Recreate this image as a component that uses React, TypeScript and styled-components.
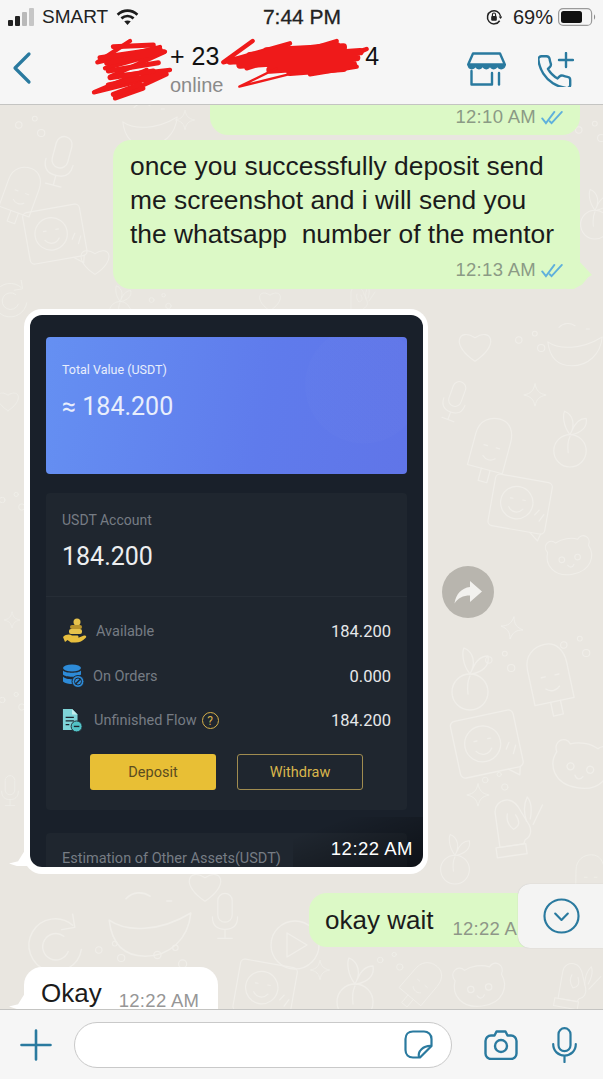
import React from "react";
import styled, { createGlobalStyle } from "styled-components";

const GlobalStyle = createGlobalStyle`
  html, body { margin: 0; padding: 0; background: #e9e6e0; }
  * { box-sizing: border-box; }
`;

const SANS = `"Liberation Sans", Arial, sans-serif`;
const ROBOTO = `Roboto, "Liberation Sans", sans-serif`;
const TEAL = "#2a7a9f";

// kind, x, y, scale, rotation - page coordinates of the wallpaper doodles
const doodles: Array<[string, number, number, number, number]> = [
  ["apple", 470, 680, 1, 0], ["pop", 550, 680, 1, -12], ["card", 487, 745, 1, -12], ["bear", 580, 770, 1, 10],
  ["mitten", 515, 825, 1, -8], ["spark", 512, 628, 0.7, 10], ["spark", 478, 795, 0.7, 0], ["dots", 500, 660, 0.8, 0],
  ["dots", 495, 780, 0.7, 0], ["dots", 575, 645, 0.8, 0], ["bear", 570, 560, 0.8, -10], ["card", 520, 505, 0.9, 10],
  ["apple", 570, 440, 0.9, 0], ["pop", 490, 450, 0.9, 15], ["mic", 455, 400, 0.8, 20], ["spark", 535, 395, 0.7, 0],
  ["heart", 475, 345, 0.9, 0], ["dots", 530, 340, 0.8, 0], ["bowl", 575, 345, 0.8, 0], ["apple", 455, 860, 0.8, 0],
  ["pop", 590, 880, 0.7, 0], ["donut", 55, 945, 1.1, 0], ["bowl", 150, 925, 1.2, 0], ["mic", 225, 915, 0.9, 0],
  ["heart", 205, 885, 0.9, 0], ["play", 295, 945, 1, 0], ["dots", 110, 950, 0.8, 0], ["dots", 170, 955, 0.9, 0],
  ["card", 265, 990, 0.9, 10], ["apple", 355, 990, 1, 0], ["bear", 480, 990, 0.9, -8], ["mitten", 575, 985, 0.8, 10],
  ["pop", 420, 985, 0.7, 40], ["spark", 320, 970, 0.6, 0], ["dots", 390, 960, 0.7, 0], ["donut", 10, 300, 0.7, 0],
  ["mic", 60, 160, 1, 15], ["heart", 95, 260, 0.8, 0], ["card", 55, 235, 0.9, -10], ["bowl", 150, 125, 0.8, 0],
  ["spark", 185, 120, 0.6, 0], ["dots", 30, 125, 0.8, 0], ["pop", 20, 195, 0.8, 20], ["apple", 120, 305, 0.6, 0],
  ["heart", 270, 300, 0.6, 0], ["mitten", 360, 300, 0.5, 0], ["bear", 520, 220, 0.8, 10], ["apple", 595, 215, 0.8, 0],
  ["dots", 590, 130, 0.8, 0], ["dots", 160, 300, 0.6, 0], ["dots", 12, 500, 0.7, 0], ["dots", 12, 700, 0.7, 0],
  ["spark", 12, 620, 0.5, 0], ["heart", 8, 400, 0.6, 0], ["mic", 10, 790, 0.6, 0],
];

const Doodle: React.FC<{ kind: string }> = ({ kind }) => {
  switch (kind) {
    case "apple":
      return (
        <>
          <circle cx="0" cy="12" r="18" />
          <path d="M0 -6C-8 -16 -8 -28 -6 -32 4 -28 6 -16 0 -6ZM2 -10C6 -20 12 -24 18 -24 20 -14 12 -8 2 -6M-2 14c-1-8 0-14 2-18" />
        </>
      );
    case "pop":
      return (
        <>
          <path d="M-20 -14C-20 -30 -8 -36 2 -36 14 -36 20 -26 20 -14V22H-20Z" />
          <path d="M-4 22V36H6V22M-8 -4h4M6 -4h4M-6 8c4 4 10 4 14 0" />
        </>
      );
    case "card":
      return (
        <>
          <rect x="-32" y="-30" width="64" height="58" rx="5" />
          <circle cx="-4" cy="-2" r="18" />
          <path d="M-12 -6h3M2 -6h3M-12 4c4 6 12 6 16 0M18 8l4-6M24 14l4-8M16 28l10 8 2-8" />
        </>
      );
    case "bear":
      return (
        <>
          <path d="M-26 -14c-6-10 6-18 12-10 8-4 20-4 28 0 6-8 18 0 12 10 6 14-2 32-26 32S-32 0-26-14Z" />
          <circle cx="-10" cy="-2" r="3.500" />
          <circle cx="10" cy="-2" r="3.500" />
          <path d="M-4 6c2 4 6 4 8 0" />
        </>
      );
    case "mitten":
      return (
        <>
          <path d="M-18 20V-14c0-8 6-12 12-12 8 0 12 8 14 14l6 14c2 6 0 12-6 14l-2 4H-18Z" />
          <path d="M-22 20h30v10h-30ZM-6 -12c-2 6 0 12 4 16 6-2 8-6 4-14M12 -2c-2-10 0-18 4-24 4 6 2 16 0 22M18 2l12-18" />
        </>
      );
    case "spark":
      return <path d="M0 -16C2 -6 6 -2 16 0 6 2 2 6 0 16-2 6-6 2-16 0-6-2-2-6 0-16Z" />;
    case "dots":
      return (
        <>
          <circle cx="-14" cy="0" r="4" />
          <circle cx="6" cy="-8" r="3" />
          <circle cx="14" cy="10" r="4.500" />
        </>
      );
    case "mic":
      return (
        <>
          <rect x="-8" y="-24" width="16" height="32" rx="8" />
          <path d="M-14 2c0 10 6 14 14 14S14 12 14 2M0 16V26M-8 26H8" />
        </>
      );
    case "donut":
      return <path d="M16 -18A24 24 0 1 0 24 4M16 -28l2 12-12 2M8 -8A12 12 0 1 0 12 6" />;
    case "bowl":
      return <path d="M-34 -4C-20 6 8 6 34 -10 32 12 16 26 -4 26S-32 14-34 -4ZM-20 -22c6-6 14-6 20-2M14 -20h4" />;
    case "play":
      return (
        <>
          <circle cx="0" cy="0" r="24" />
          <path d="M-8 -12L12 0-8 12Z" />
        </>
      );
    default:
      return <path d="M0 18C-28 0-18-20 0-8 18-20 28 0 0 18Z" />;
  }
};

const App: React.FC = () => {
  return (
    <Page>
      <GlobalStyle />
      <TopBar>
        <StatusBar>
          <StatusLeft>
            <SignalIcon />
            <span>SMART</span>
            <WifiIcon />
          </StatusLeft>
          <StatusTime>7:44 PM</StatusTime>
          <StatusRight>
            <LockIcon />
            <span>69%</span>
            <BatteryIcon />
          </StatusRight>
        </StatusBar>
        <NavBar>
          <BackIcon />
          <Contact>
            <ContactName>
              <span>+ 23</span>
              <NameGap />
              <span>4</span>
            </ContactName>
            <ContactStatus>online</ContactStatus>
          </Contact>
          <NavActions>
            <StoreIcon />
            <CallPlusIcon />
          </NavActions>
        </NavBar>
        <Scribble />
      </TopBar>

      <Chat>
        <Wallpaper viewBox="0 0 603 904" aria-hidden="true">
          <g transform="translate(0 -105)" fill="none" stroke="#f0eee9" strokeWidth="1.300" strokeLinejoin="round" strokeLinecap="round">
            {doodles.map(([kind, x, y, s, rot], i) => (
              <g key={i} transform={`translate(${x} ${y}) rotate(${rot}) scale(${s})`}>
                <Doodle kind={kind} />
              </g>
            ))}
          </g>
        </Wallpaper>

        <ClippedSent>
          <Meta>12:10 AM <Ticks /></Meta>
        </ClippedSent>

        <SentBubble>
          <BubbleText>
            once you successfully deposit send
            <br />
            me screenshot and i will send you
            <br />
            the whatsapp&nbsp; number of the mentor
          </BubbleText>
          <SentMeta>12:13 AM <Ticks /></SentMeta>
          <SentTail />
        </SentBubble>

        <ImageRow>
          <ImageBubble>
            <ReceivedTail $bottom={8} />
            <Screenshot>
              <ValueCard>
                <ValueLabel>Total Value (USDT)</ValueLabel>
                <ValueAmount>≈ 184.200</ValueAmount>
              </ValueCard>
              <AccountPanel>
                <AccountHead>
                  <AccountLabel>USDT Account</AccountLabel>
                  <AccountAmount>184.200</AccountAmount>
                </AccountHead>
                <AccountRows>
                  <AccountRow>
                    <RowLabel $gap={7}><CoinsIcon />Available</RowLabel>
                    <RowValue>184.200</RowValue>
                  </AccountRow>
                  <AccountRow>
                    <RowLabel $gap={9}><DatabaseIcon />On Orders</RowLabel>
                    <RowValue>0.000</RowValue>
                  </AccountRow>
                  <AccountRow>
                    <RowLabel $gap={11}><FlowIcon />Unfinished Flow<HelpMark>?</HelpMark></RowLabel>
                    <RowValue>184.200</RowValue>
                  </AccountRow>
                </AccountRows>
                <AccountButtons>
                  <DepositButton>Deposit</DepositButton>
                  <WithdrawButton>Withdraw</WithdrawButton>
                </AccountButtons>
              </AccountPanel>
              <OtherPanel>Estimation of Other Assets(USDT)</OtherPanel>
              <ImageTime>12:22 AM</ImageTime>
            </Screenshot>
          </ImageBubble>
          <ForwardButton>
            <ForwardIcon />
          </ForwardButton>
        </ImageRow>

        <WaitBubble>
          <ShortText>okay wait</ShortText>
          <ShortMeta>12:22 AM</ShortMeta>
        </WaitBubble>

        <ScrollDown>
          <ScrollDownIcon />
        </ScrollDown>

        <OkayBubble>
          <ShortText>Okay</ShortText>
          <ShortMeta>12:22 AM</ShortMeta>
          <ReceivedTail $bottom={18} />
        </OkayBubble>
      </Chat>

      <Composer>
        <PlusIcon />
        <ComposerInput>
          <StickerIcon />
        </ComposerInput>
        <ComposerActions>
          <CameraIcon />
          <MicIcon />
        </ComposerActions>
      </Composer>
    </Page>
  );
};

export default App;

const SignalIcon = () => (
  <svg width="27" height="20" viewBox="0 0 27 20">
    <rect x="0" y="13" width="5" height="6" rx="1" fill="#222" />
    <rect x="7" y="9" width="5" height="10" rx="1" fill="#222" />
    <rect x="14" y="5" width="5" height="14" rx="1" fill="#b9b9b9" />
    <rect x="21" y="1" width="5" height="18" rx="1" fill="#c6c6c6" />
  </svg>
);

const WifiIcon = () => (
  <svg width="25" height="18" viewBox="0 0 26 20" fill="none" stroke="#1c1c1c" strokeWidth="3">
    <path d="M2 7.500C8.500 1.500 17.500 1.500 24 7.500" />
    <path d="M6.200 11.500C10.300 8 15.700 8 19.800 11.500" />
    <path d="M13 19l-3.600-4.200C11.400 13.400 14.600 13.400 16.600 14.800Z" fill="#1c1c1c" stroke="none" />
  </svg>
);

const LockIcon = () => (
  <StatusLock width="16" height="16" viewBox="0 0 17 17" fill="none" stroke="#222" strokeWidth="1.600">
    <path d="M14.500 12.500A7 7 0 1 1 15.500 8" />
    <path d="M13.500 8h4l-2 2.500Z" fill="#222" stroke="none" />
    <rect x="5.500" y="7.500" width="6" height="5" rx="1" fill="#222" stroke="none" />
    <path d="M6.800 7.500V6a1.700 1.700 0 0 1 3.400 0v1.500" strokeWidth="1.200" />
  </StatusLock>
);

const BatteryIcon = () => (
  <svg width="38" height="18" viewBox="0 0 38 18">
    <rect x="0.600" y="0.600" width="33" height="16.800" rx="4.500" fill="none" stroke="#9a9a9a" strokeWidth="1.200" />
    <rect x="3" y="3" width="21" height="12" rx="2.500" fill="#111" />
    <path d="M36 6.500c1.500.5 1.500 4.500 0 5Z" fill="#8c8c8c" />
  </svg>
);

const BackIcon = () => (
  <NavBack width="20" height="34" viewBox="0 0 20 34" fill="none" stroke={TEAL} strokeWidth="3.200" strokeLinecap="round" strokeLinejoin="round">
    <path d="M17 3L3 17l14 14" />
  </NavBack>
);

const StoreIcon = () => (
  <svg width="39" height="34" viewBox="0 0 39 34" fill="none" stroke={TEAL} strokeWidth="2.400" strokeLinejoin="round" strokeLinecap="round">
    <path d="M6 1.500h27l4.800 11H1.200Z" />
    <path d="M1.200 13c.5 5 6.500 5 7.200 0 .7 5 6.500 5 7.300 0 .7 5 6.500 5 7.300 0 .7 5 6.500 5 7.300 0 .7 5 7 5 7.800 0" fill={TEAL} strokeWidth="1.400" />
    <path d="M4.500 19v13.500H25V21" />
    <path d="M32 21v11.500" />
  </svg>
);

const CallPlusIcon = () => (
  <svg width="36" height="35" viewBox="0 0 36 35" fill="none" stroke={TEAL} strokeLinecap="round" strokeLinejoin="round">
    <g transform="translate(-3 1) scale(1.600)" strokeWidth="1.500">
      <path d="M22 16.920v3a2 2 0 0 1-2.180 2 19.790 19.790 0 0 1-8.630-3.070 19.500 19.500 0 0 1-6-6 19.790 19.790 0 0 1-3.070-8.670A2 2 0 0 1 4.110 2h3a2 2 0 0 1 2 1.720 12.840 12.840 0 0 0 .7 2.810 2 2 0 0 1-.45 2.110L8.090 9.910a16 16 0 0 0 6 6l1.270-1.270a2 2 0 0 1 2.110-.45 12.840 12.840 0 0 0 2.810.7A2 2 0 0 1 22 16.920z" />
    </g>
    <path d="M28 1v14M21 8h14" strokeWidth="2.400" />
  </svg>
);

const Ticks = () => (
  <svg width="23" height="15" viewBox="0 0 24 16" fill="none" stroke="#5fb0dc" strokeWidth="2" strokeLinecap="round">
    <path d="M1 9l4 5L14 2" />
    <path d="M9 12l2 2L22 2" />
  </svg>
);

const ForwardIcon = () => (
  <svg width="30" height="26" viewBox="0 0 30 26">
    <path d="M17 2l12 10.500L17 23v-6.500C10 16.500 5 19 1.500 24.500 3 15 8.500 9 17 8Z" fill="#f2f1ee" />
  </svg>
);

const ScrollDownIcon = () => (
  <svg width="37" height="36" viewBox="0 0 38 37" fill="none" stroke={TEAL} strokeWidth="2.200" strokeLinecap="round" strokeLinejoin="round">
    <ellipse cx="19" cy="18.500" rx="17.500" ry="17" />
    <path d="M12.500 16L19 22.500l6.500-6.500" />
  </svg>
);

const PlusIcon = () => (
  <svg width="32" height="32" viewBox="0 0 32 32" fill="none" stroke={TEAL} strokeWidth="2.600" strokeLinecap="round">
    <path d="M16 1.500v29M1.500 16h29" />
  </svg>
);

const StickerIcon = () => (
  <svg width="29" height="29" viewBox="0 0 29 29" fill="none" stroke={TEAL} strokeWidth="2.200" strokeLinejoin="round">
    <path d="M9 1.500h11c4 0 7.500 3 7.500 7.500v7L16 27.500H9c-4.500 0-7.500-3-7.500-7.500V9C1.500 4.500 4.500 1.500 9 1.500Z" />
    <path d="M15 27.500c-1.500-6 4-12 12.500-11.500" />
  </svg>
);

const CameraIcon = () => (
  <svg width="34" height="30" viewBox="0 0 34 30" fill="none" stroke={TEAL} strokeWidth="2.400" strokeLinejoin="round">
    <path d="M7 5.500h3.500l2-4h9l2 4H27c3 0 5.500 2.500 5.500 5.500v12.500c0 3-2.500 5.500-5.500 5.500H7c-3 0-5.500-2.500-5.500-5.500V11C1.500 8 4 5.500 7 5.500Z" />
    <circle cx="17" cy="16" r="6" />
  </svg>
);

const MicIcon = () => (
  <svg width="25" height="36" viewBox="0 0 25 36" fill="none" stroke={TEAL} strokeWidth="2.200" strokeLinecap="round">
    <rect x="6.500" y="1.200" width="12" height="23" rx="6" />
    <path d="M1.200 17c0 7 5 11.500 11.300 11.500S23.800 24 23.800 17M12.500 28.500v6.500" />
  </svg>
);

const CoinsIcon = () => (
  <svg width="27" height="27" viewBox="0 0 27 27">
    <circle cx="15" cy="4" r="3.500" fill="#e6c24c" />
    <rect x="8" y="7" width="12" height="4" rx="2" fill="#b8932c" />
    <rect x="7" y="11" width="13" height="5" rx="2" fill="#e6c24c" />
    <path d="M1 19c3-3 7-3 9-1.500h5c2 0 2 2.500 0 2.500h-4l6-.5 5-2c2-.5 3 1 1.500 2.500-3 3-6 4.500-10 4.500H9L5.500 22 3 24Z" fill="#e8bf3e" />
  </svg>
);

const DatabaseIcon = () => (
  <svg width="22" height="24" viewBox="0 0 22 24">
    <ellipse cx="10" cy="4" rx="9" ry="3.500" fill="#2d8bd8" />
    <path d="M1 6.500c2 3 16 3 18 0v4c-2 3-16 3-18 0Z" fill="#2d8bd8" />
    <path d="M1 12.500c2 3 10 3 12 2.500l-2 5c-4 0-8-.5-10-2.500Z" fill="#2d8bd8" />
    <circle cx="16" cy="17.500" r="6" fill="#2d8bd8" stroke="#1f262f" strokeWidth="1" />
    <path d="M13.500 20l5-5" stroke="#1f262f" strokeWidth="1.400" />
    <circle cx="16" cy="17.500" r="3.500" fill="none" stroke="#1f262f" strokeWidth="1" />
  </svg>
);

const FlowIcon = () => (
  <svg width="21" height="27" viewBox="0 0 23 27">
    <path d="M1 1h10l6 6v9l-6 8H1Z" fill="#7ed4d8" />
    <path d="M11 1l6 6h-6Z" fill="#c5eeee" />
    <path d="M4 10h9M4 14h9M4 18h4" stroke="#1f262f" strokeWidth="1.400" />
    <circle cx="16" cy="20" r="6" fill="#52c2c6" stroke="#1f262f" strokeWidth="1" />
    <path d="M13 20h6" stroke="#1f262f" strokeWidth="1.500" />
  </svg>
);

// scratch marks hiding the contact's name; coordinates follow a 3x crop of the header
const Scribble = () => (
  <ScribbleSvg viewBox="0 0 900 210" width="300" height="70" fill="none" stroke="#ef1a1a" strokeLinecap="round" strokeLinejoin="round">
    <g strokeWidth="13">
      <path d="M120 18L22 82 210 36 45 100 225 50 60 125 240 105 70 150 170 105 12 172 230 118 75 190 160 160" />
      <path d="M70 35L190 30M30 68l180-26M50 85l170-35M55 108l150-25M60 128l130-20M55 150l90-20M70 178l80-30" strokeWidth="15" />
    </g>
    <g strokeWidth="13">
      <path d="M488 18L400 82 600 25 470 100 740 18 600 110 830 42 660 118 800 95" />
      <path d="M420 78L810 50M450 90L800 68M480 62L740 32M540 105L790 88M530 48L760 36M600 112L760 100" strokeWidth="22" />
      <path d="M560 100L448 155 620 112" strokeWidth="7" />
    </g>
  </ScribbleSvg>
);

const Page = styled.div`
  width: 603px;
  height: 1079px;
  display: flex;
  flex-direction: column;
  overflow: hidden;
  font-family: ${SANS};
  background: #e9e6e0;
`;

const TopBar = styled.header`
  flex: none;
  height: 105px;
  padding: 0 0 0 8px;
  background: #f6f6f6;
  border-bottom: 1px solid #c4c4c2;
  position: relative;
  z-index: 2;
`;

const StatusBar = styled.div`
  height: 34px;
  display: grid;
  grid-template-columns: 1fr auto 1fr;
  align-items: center;
  padding-right: 7px;
  font-size: 20px;
  color: #222;
`;

const StatusLeft = styled.div`
  display: flex;
  align-items: center;
  gap: 7px;
  font-size: 19px;
`;

const StatusTime = styled.div`
  font-size: 21px;
  -webkit-text-stroke: 0.3px #222;
`;

const StatusRight = styled.div`
  display: flex;
  align-items: center;
  justify-content: flex-end;
  gap: 5px;
`;

const StatusLock = styled.svg`
  margin-right: 6px;
`;

const NavBar = styled.div`
  height: 70px;
  display: flex;
  align-items: center;
`;

const NavBack = styled.svg`
  flex: none;
  margin: 0 0 2px 4px;
`;

const Contact = styled.div`
  margin-left: 138px;
  flex: 1;
  margin-top: -1px;
`;

const ContactName = styled.div`
  display: flex;
  font-size: 25px;
  line-height: 28px;
  color: #111;
`;

const NameGap = styled.div`
  width: 146px;
`;

const ContactStatus = styled.div`
  margin-top: 4px;
  font-size: 20px;
  line-height: 22px;
  color: #8a8a8a;
`;

const ScribbleSvg = styled.svg`
  position: absolute;
  left: 90px;
  top: 35px;
`;

const NavActions = styled.div`
  display: flex;
  align-items: center;
  gap: 32px;
  padding-right: 29px;
`;

const Chat = styled.main`
  flex: 1;
  min-height: 0;
  position: relative;
  overflow: hidden;
  display: flex;
  flex-direction: column;

  > * {
    flex: none;
  }
`;

const Wallpaper = styled.svg`
  position: absolute;
  inset: 0;
  width: 603px;
  height: 904px;
`;

const Bubble = styled.div`
  position: relative;
  background: #dcf9c6;
  border-radius: 18px;
`;

const ClippedSent = styled(Bubble)`
  align-self: flex-end;
  width: 370px;
  height: 30px;
  margin-right: 23px;
  border-radius: 0 0 18px 18px;
  display: flex;
  justify-content: flex-end;
  padding: 0 16px 0 0;
`;

const SentBubble = styled(Bubble)`
  align-self: flex-end;
  width: 467px;
  height: 149px;
  margin: 5px 23px 0 0;
  padding: 9px 16px 0 17px;
`;

const SentTail = styled.div`
  position: absolute;
  right: -12px;
  bottom: 0;
  width: 26px;
  height: 28px;
  background: #dcf9c6;
  clip-path: polygon(50% 0, 100% 50%, 85% 58%, 62% 84%, 30% 100%, 0 100%);
`;

const BubbleText = styled.div`
  font-size: 26.400px;
  line-height: 34px;
  white-space: nowrap;
  color: #1b1b1b;
`;

const Meta = styled.div`
  display: flex;
  align-items: center;
  justify-content: flex-end;
  gap: 5px;
  font-size: 18.500px;
  line-height: 24px;
  height: 24px;
  color: #8b9a85;
  letter-spacing: 0.3px;
`;

const SentMeta = styled(Meta)`
  margin-top: 7px;
`;

const ImageRow = styled.div`
  display: flex;
  align-items: center;
  margin: 20px 0 0 24px;
  gap: 14px;
`;

const ImageBubble = styled.div`
  position: relative;
  flex: none;
  width: 404px;
  height: 565px;
  padding: 6px 5px 7px 6px;
  background: #fff;
  border-radius: 18px;
`;

const ReceivedTail = styled.div<{ $bottom: number }>`
  position: absolute;
  left: -15px;
  bottom: ${(p) => p.$bottom}px;
  width: 26px;
  height: 16px;
  background: #fff;
  clip-path: polygon(62% 0, 100% 0, 100% 100%, 30% 100%, 0 85%, 35% 70%);
`;

const Screenshot = styled.div`
  position: relative;
  height: 100%;
  padding: 22px 16px 0 16px;
  background: #19202a;
  border-radius: 12px;
  overflow: hidden;
  font-family: ${ROBOTO};

  &::after {
    content: "";
    position: absolute;
    right: 0;
    bottom: 0;
    width: 130px;
    height: 50px;
    background: linear-gradient(to bottom right, transparent 20%, rgba(0, 0, 0, 0.45));
  }
`;

const ValueCard = styled.div`
  height: 137px;
  padding: 25px 16px;
  border-radius: 4px;
  background:
    radial-gradient(circle at 88% 35%, rgba(255, 255, 255, 0.012) 0 58px, transparent 59px),
    linear-gradient(100deg, #6590f2 0%, #5f7bec 60%, #6075e8 100%);
  color: #e8eefc;
`;

const ValueLabel = styled.div`
  font-size: 12.500px;
  line-height: 16px;
`;

const ValueAmount = styled.div`
  font-size: 25px;
  line-height: 30px;
  margin-top: 14px;
`;

const AccountPanel = styled.div`
  height: 317px;
  margin-top: 19px;
  background: #1f262f;
  border-radius: 4px;
`;

const AccountHead = styled.div`
  height: 104px;
  padding: 19px 16px 0;
  border-bottom: 1px solid #262d36;
`;

const AccountLabel = styled.div`
  font-size: 14px;
  line-height: 16px;
  color: #767c84;
`;

const AccountAmount = styled.div`
  font-size: 25px;
  line-height: 30px;
  margin-top: 14px;
  color: #eceef0;
`;

const AccountRows = styled.div`
  display: flex;
  flex-direction: column;
  gap: 17.500px;
  padding: 21px 16px 0;
`;

const AccountRow = styled.div`
  display: flex;
  align-items: center;
  justify-content: space-between;
  height: 27px;
`;

const RowLabel = styled.div<{ $gap: number }>`
  display: flex;
  align-items: center;
  gap: ${(p) => p.$gap}px;
  font-size: 14.500px;
  color: #767c84;
`;

const HelpMark = styled.span`
  display: inline-flex;
  align-items: center;
  justify-content: center;
  width: 17px;
  height: 17px;
  margin-left: -6px;
  border: 1.500px solid #d6b04a;
  border-radius: 50%;
  font-size: 12px;
  color: #d6b04a;
`;

const RowValue = styled.div`
  font-size: 16.500px;
  color: #e6e8ea;
`;

const AccountButtons = styled.div`
  display: flex;
  gap: 21px;
  padding: 20px 0 0 44px;
`;

const DepositButton = styled.button`
  width: 126px;
  height: 36px;
  border: none;
  border-radius: 3px;
  background: #e8bf35;
  color: #5a4c20;
  font-family: ${ROBOTO};
  font-size: 14.500px;
`;

const WithdrawButton = styled.button`
  width: 126px;
  height: 36px;
  border: 1px solid #a08c50;
  border-radius: 3px;
  background: transparent;
  color: #d9b64c;
  font-family: ${ROBOTO};
  font-size: 14.500px;
`;

const OtherPanel = styled.div`
  height: 60px;
  margin-top: 23px;
  padding: 17px 16px 0;
  background: #1f262f;
  border-radius: 4px;
  font-size: 14.500px;
  color: #767c84;
`;

const ImageTime = styled.div`
  position: absolute;
  z-index: 1;
  right: 10px;
  bottom: 8px;
  font-size: 18.500px;
  line-height: 20px;
  letter-spacing: 0.5px;
  color: #fff;
  font-family: ${SANS};
`;

const ForwardButton = styled.div`
  width: 52px;
  height: 52px;
  border-radius: 50%;
  background: #b8b5ae;
  display: flex;
  align-items: center;
  justify-content: center;
`;

const WaitBubble = styled(Bubble)`
  align-self: flex-end;
  width: 240px;
  height: 54px;
  margin: 19px 54px 0 0;
  padding: 12px 0 0 16px;
  display: flex;
  gap: 19px;
`;

const ShortText = styled.div`
  font-size: 26px;
  line-height: 30px;
  color: #1b1b1b;
`;

const ShortMeta = styled.div`
  font-size: 18.500px;
  line-height: 22px;
  margin-top: 13px;
  color: #8e9688;
  letter-spacing: 0.3px;
  white-space: nowrap;
`;

const ScrollDown = styled.div`
  position: absolute;
  right: 0;
  top: 779px;
  width: 85px;
  height: 64px;
  background: #f4f4f3;
  border-radius: 12px 0 0 12px;
  display: flex;
  align-items: center;
  padding-left: 25px;
  box-shadow: 0 0 1px #bbb;
`;

const OkayBubble = styled(Bubble)`
  align-self: flex-start;
  width: 194px;
  height: 60px;
  margin: 20px 0 0 24px;
  padding: 11px 0 0 17px;
  background: #fff;
  display: flex;
  gap: 17px;

  ${ShortMeta} {
    color: #969696;
    margin-top: 12px;
  }
`;

const Composer = styled.footer`
  flex: none;
  height: 70px;
  display: flex;
  align-items: center;
  padding-left: 20px;
  background: #f6f6f6;
  border-top: 1px solid #c4c4c2;
  position: relative;
  z-index: 2;
`;

const ComposerInput = styled.div`
  width: 378px;
  height: 46px;
  margin-left: 22px;
  padding-right: 18px;
  background: #fff;
  border: 1px solid #c9c9c9;
  border-radius: 23px;
  display: flex;
  align-items: center;
  justify-content: flex-end;
`;

const ComposerActions = styled.div`
  display: flex;
  align-items: center;
  gap: 34px;
  margin-left: 32px;
`;
